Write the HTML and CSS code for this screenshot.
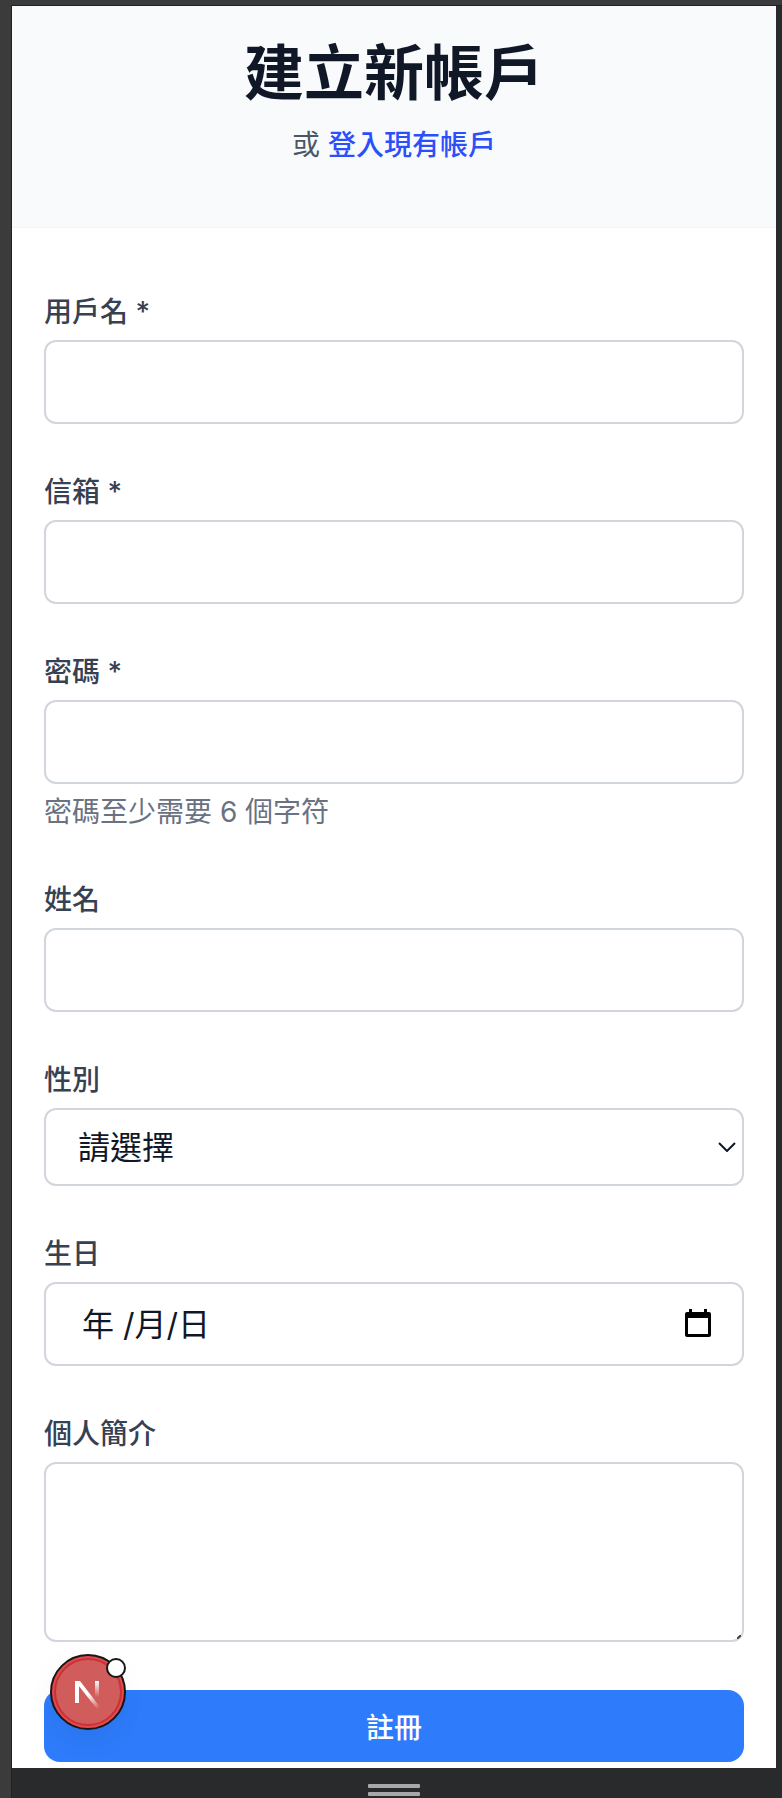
FILE: index.html
```html
<!DOCTYPE html>
<html lang="zh-Hant">
<head>
    <meta charset="UTF-8">
    <meta name="viewport" content="width=device-width, initial-scale=1.0">
    <title>建立新帳戶</title>
    <link rel="stylesheet" href="styles.css">
</head>
<body>
    <div class="device">
        <div class="screen">
            <header class="page-header">
                <h1>建立新帳戶</h1>
                <p>或 <a href="#login">登入現有帳戶</a></p>
            </header>
            <form class="register-form">
                <div class="field">
                    <label for="username">用戶名 *</label>
                    <input type="text" id="username" name="username">
                </div>
                <div class="field">
                    <label for="email">信箱 *</label>
                    <input type="email" id="email" name="email">
                </div>
                <div class="field">
                    <label for="password">密碼 *</label>
                    <input type="password" id="password" name="password">
                    <p class="hint">密碼至少需要 6 個字符</p>
                </div>
                <div class="field">
                    <label for="full-name">姓名</label>
                    <input type="text" id="full-name" name="fullName">
                </div>
                <div class="field">
                    <label for="gender">性別</label>
                    <div class="control">
                        <select id="gender" name="gender">
                            <option value="">請選擇</option>
                            <option value="male">男</option>
                            <option value="female">女</option>
                        </select>
                        <svg class="chevron" viewBox="0 0 18 10" aria-hidden="true">
                            <path d="M1 1l8 8 8-8" fill="none" stroke="#101828" stroke-width="2"/>
                        </svg>
                    </div>
                </div>
                <div class="field">
                    <label for="birthday">生日</label>
                    <div class="control">
                        <input type="text" id="birthday" class="date-input" name="birthday" placeholder="年 /月/日">
                        <button type="button" class="calendar-btn" aria-label="選擇日期">
                            <svg viewBox="0 0 26 28" aria-hidden="true">
                                <path fill="#000" fill-rule="evenodd" d="M4 0h3v3h12V0h3v3h2a2 2 0 0 1 2 2v21a2 2 0 0 1-2 2H2a2 2 0 0 1-2-2V5a2 2 0 0 1 2-2h2zM3 9v16h20V9z"/>
                            </svg>
                        </button>
                    </div>
                </div>
                <div class="field">
                    <label for="bio">個人簡介</label>
                    <div class="control">
                        <textarea id="bio" name="bio"></textarea>
                        <svg class="grip" viewBox="0 0 4 4" aria-hidden="true">
                            <path d="M0 4l4-4" stroke="#444" stroke-width="2"/>
                        </svg>
                    </div>
                </div>
                <button type="submit" class="submit-btn">註冊</button>
            </form>

            <!-- dev tools badge -->
            <button type="button" class="dev-badge" aria-label="Next.js">
                <svg viewBox="0 0 76 76" aria-hidden="true">
                    <defs>
                        <linearGradient id="diagonal" gradientUnits="userSpaceOnUse" x1="38" y1="41" x2="48" y2="55">
                            <stop offset="0" stop-color="#fff"/>
                            <stop offset="1" stop-color="#fff" stop-opacity="0"/>
                        </linearGradient>
                        <linearGradient id="stem" gradientUnits="userSpaceOnUse" x1="0" y1="27" x2="0" y2="43">
                            <stop offset="0" stop-color="#fff"/>
                            <stop offset="1" stop-color="#fff" stop-opacity="0"/>
                        </linearGradient>
                    </defs>
                    <circle cx="38" cy="38" r="37" fill="#e5484d" stroke="#171717" stroke-width="2"/>
                    <circle cx="38" cy="38" r="33" fill="#d15c5c" stroke="#c83234" stroke-width="2"/>
                    <path d="M25 27h4v22h-4z" fill="#fff"/>
                    <path d="M25 27h5l20 26-3 2-22-28z" fill="url(#diagonal)"/>
                    <path d="M45 27h4v17h-4z" fill="url(#stem)"/>
                    <circle cx="66" cy="14" r="9" fill="#fff" stroke="#171717" stroke-width="2"/>
                </svg>
            </button>
        </div>
        <div class="resize-bar">
            <span></span>
            <span></span>
        </div>
    </div>
</body>
</html>
```
FILE: styles.css
```css
* {
    box-sizing: border-box;
}
body {
    margin: 0;
    padding: 5px 0 0 11px;
    background-color: #3b3b3b;
    font-family: Inter, "Noto Sans CJK TC", sans-serif;
    font-size: 28px;
    line-height: 40px;
    color: #101828;
}
h1, p {
    margin: 0;
}
.device {
    padding-right: 6px;
    border-top: 1px solid #202124;
    border-left: 1px solid #202124;
    background-color: #282a2c;
}
.screen {
    position: relative;
    padding-bottom: 6px;
    background-color: #fff;
}

/* header */
.page-header {
    padding: 31px 32px 62px;
    background-color: #f9fafb;
    border-bottom: 1px solid #f3f4f6;
    text-align: center;
}
.page-header h1 {
    margin-bottom: 16px;
    font-size: 60px;
    line-height: 72px;
    font-weight: 600;
}
.page-header p {
    color: #4a5565;
}
.page-header a {
    color: #2b50fb;
    font-weight: 500;
    text-decoration: none;
}

/* form */
.register-form {
    display: flex;
    flex-direction: column;
    gap: 48px;
    padding: 64px 32px 0;
}
.field {
    display: flex;
    flex-direction: column;
    gap: 8px;
}
.field label {
    color: #364153;
    font-weight: 500;
}
.hint {
    color: #6a7282;
}
.control {
    position: relative;
    display: flex;
}
input, select, textarea {
    width: 100%;
    height: 84px;
    margin: 0;
    padding: 0 32px;
    border: 2px solid #d1d5dc;
    border-radius: 12px;
    background-color: #fff;
    color: #101828;
    font-family: inherit;
    font-size: 32px;
}
input::placeholder {
    color: #101828;
    opacity: 1;
}
select {
    height: 78px;
    appearance: none;
}
textarea {
    height: 180px;
    padding: 16px 32px;
    resize: none;
}
.date-input {
    padding: 0 36px;
}
.chevron {
    position: absolute;
    top: 34px;
    right: 8px;
    width: 18px;
    height: 10px;
}
.calendar-btn {
    position: absolute;
    top: 27px;
    right: 33px;
    width: 26px;
    height: 28px;
    padding: 0;
    border: 0;
    background: none;
}
.calendar-btn svg, .dev-badge svg {
    display: block;
}
.grip {
    position: absolute;
    right: 3px;
    bottom: 3px;
    width: 4px;
    height: 4px;
}
.submit-btn {
    height: 72px;
    border: 0;
    border-radius: 16px;
    background-color: #2e7cfb;
    color: #fff;
    font-family: inherit;
    font-size: 28px;
    font-weight: 500;
}

.dev-badge {
    position: absolute;
    left: 38px;
    bottom: 38px;
    width: 76px;
    height: 76px;
    padding: 0;
    border: 0;
    border-radius: 50%;
    background: none;
    box-shadow: 0 16px 32px -8px rgba(0, 0, 0, 0.06), 0 4px 32px rgba(0, 0, 0, 0.03);
}

.resize-bar {
    display: flex;
    flex-direction: column;
    align-items: center;
    gap: 4px;
    height: 30px;
    padding-top: 16px;
}
.resize-bar span {
    width: 52px;
    height: 4px;
    border-radius: 1px;
    background-color: #a8a8a8;
}
```
